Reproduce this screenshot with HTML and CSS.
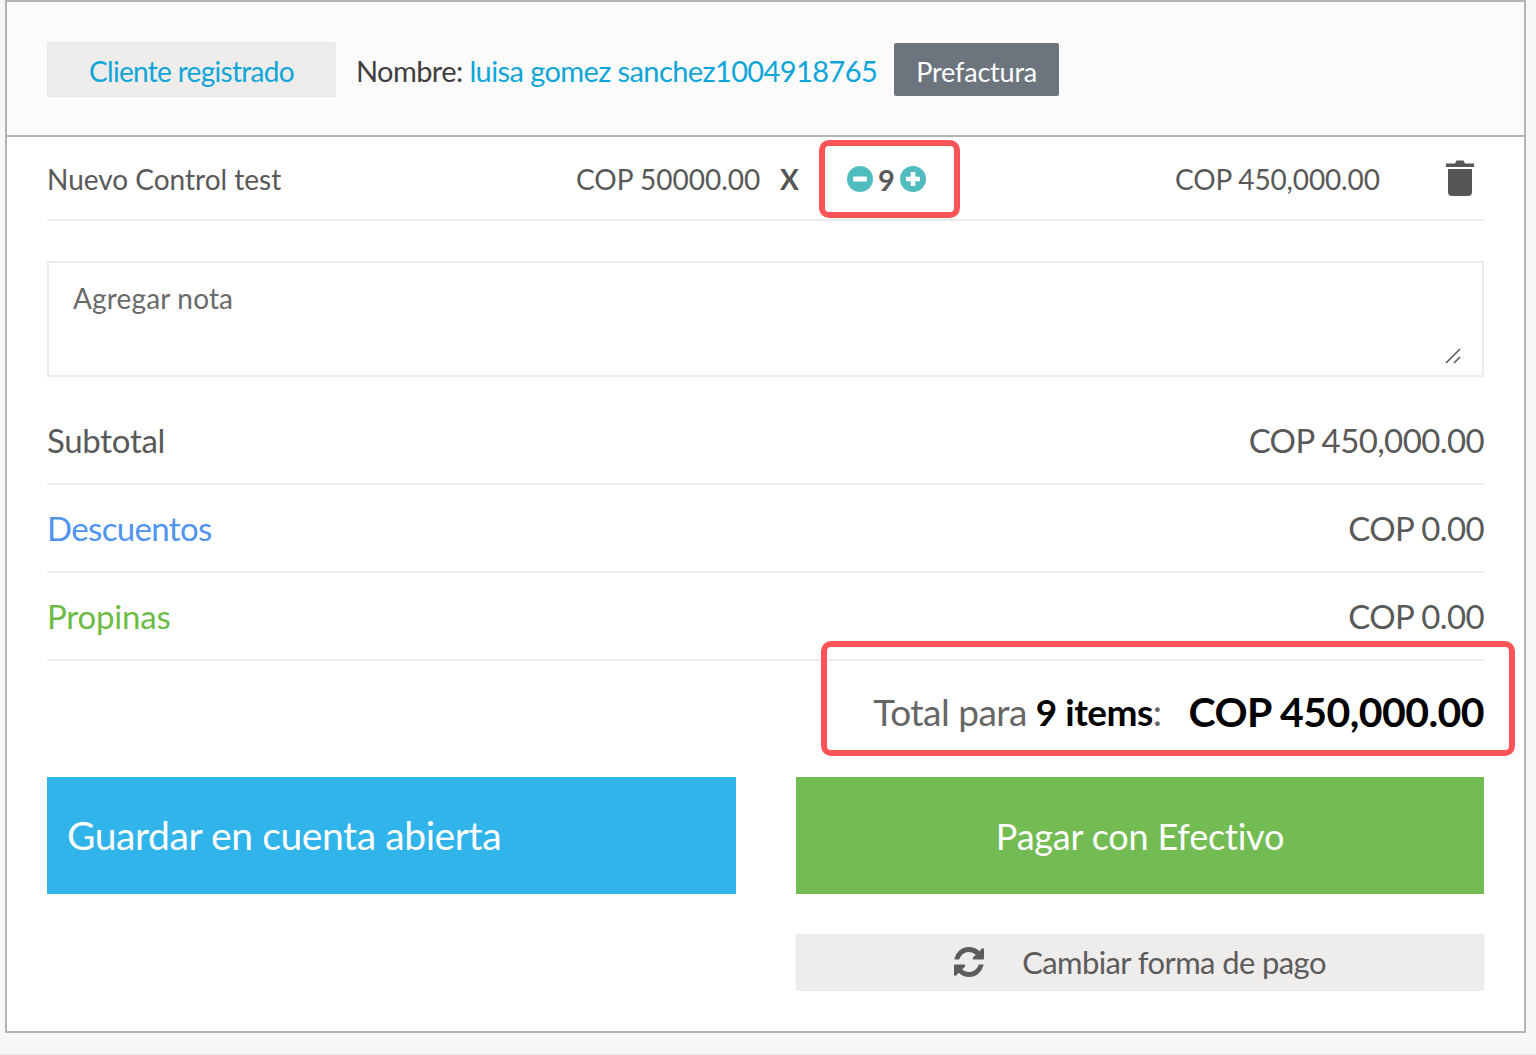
FILE: index.html
```html
<!DOCTYPE html>
<html lang="es">
<head>
<meta charset="utf-8">
<title>Cuenta</title>
<link rel="stylesheet" href="styles.css">
</head>
<body>
<main class="panel">
  <header class="head">
    <button class="client-btn">Cliente registrado</button>
    <span class="client-name">Nombre: <a class="client-link">luisa gomez sanchez1004918765</a></span>
    <button class="invoice-btn">Prefactura</button>
  </header>
  <section class="body">
    <div class="item">
      <span class="item-name">Nuevo Control test</span>
      <span class="item-price">COP 50000.00</span>
      <span class="item-x">X</span>
      <span class="qty">
        <svg class="qty-icon" viewBox="0 0 26 26"><circle cx="13" cy="13" r="13" fill="#50bcbd"/><rect x="6" y="10.5" width="14" height="5" rx="1" fill="#fff"/></svg>
        <span class="qty-num">9</span>
        <svg class="qty-icon" viewBox="0 0 26 26"><circle cx="13" cy="13" r="13" fill="#50bcbd"/><path d="M6 13h14M13 6v14" stroke="#fff" stroke-width="4.6" fill="none"/></svg>
      </span>
      <span class="item-total">COP 450,000.00</span>
      <svg class="trash" viewBox="0 0 28 38"><path d="M0 4.5h9L10.5 1.5h7L19 4.5h9v3.500H0z" fill="#555"/><path d="M2 10h24v23a4 4 0 0 1-4 4H6a4 4 0 0 1-4-4z" fill="#555"/></svg>
    </div>
    <div class="note">
      <span class="note-text">Agregar nota</span>
      <svg class="grip" viewBox="0 0 16 16"><path d="M1 15L15 1M9 15l6-6" stroke="#555" stroke-width="1.500" fill="none"/></svg>
    </div>
    <div class="sum-row"><span class="subtotal">Subtotal</span><span class="sum-value">COP 450,000.00</span></div>
    <div class="sum-row"><span class="discount">Descuentos</span><span class="sum-value">COP 0.00</span></div>
    <div class="sum-row"><span class="tips">Propinas</span><span class="sum-value">COP 0.00</span></div>
    <div class="total">
      <span class="total-label">Total para <b class="total-strong">9 items</b>:</span>
      <strong class="total-value">COP 450,000.00</strong>
    </div>
    <div class="actions">
      <button class="btn btn-save">Guardar en cuenta abierta</button>
      <button class="btn btn-pay">Pagar con Efectivo</button>
    </div>
    <div class="change-row">
      <button class="change-btn">
        <svg class="sync" viewBox="0 0 1536 1536"><path fill="#5c5c5c" d="M1511 928q0 5-1 7-64 268-268 434.500T764 1536q-146 0-282.500-55T238 1324l-129 129q-19 19-45 19t-45-19-19-45V960q0-26 19-45t45-19h448q26 0 45 19t19 45-19 45l-137 137q71 66 161 102t187 36q134 0 250-65t186-179q11-17 53-117 8-23 30-23h192q13 0 22.500 9.500t9.500 22.500zm25-800v448q0 26-19 45t-45 19h-448q-26 0-45-19t-19-45 19-45l138-138Q969 256 768 256q-134 0-250 65T332 500q-11 17-53 117-8 23-30 23H50q-13 0-22.500-9.500T18 608v-7q65-268 270-434.500T768 0q146 0 284 55.500T1297 212l130-129q19-19 45-19t45 19 19 45z"/></svg>
        <span>Cambiar forma de pago</span>
      </button>
    </div>
  </section>
  <div class="mark mark-qty"></div>
  <div class="mark mark-total"></div>
</main>
</body>
</html>
```
FILE: styles.css
```css
* { box-sizing: border-box; }
html, body { margin: 0; height: 1055px; overflow: hidden; }
body { background: #f6f7f9; font-family: Lato, sans-serif; color: #595959; padding: 0 10px 0 5px; border-bottom: 1px solid #e6e6e6; }
button { font-family: inherit; cursor: pointer; border: 0; padding: 0; }
.panel { position: relative; height: 1033px; background: #fff; border: 2px solid #b4b4b4; }
.head { height: 135px; background: #fbfbfb; border-bottom: 2px solid #b4b4b4; display: flex; align-items: center; padding: 1px 0 0 40px; }
.client-btn { width: 289px; height: 55px; padding-top: 3px; background: #efecec; border: 1px solid #e9e9e9; color: #0ea5d8; font-size: 28px; letter-spacing: -.7px; }
.client-name { margin: 2px 0 0 20px; font-size: 29px; color: #3f3f3f; letter-spacing: -.6px; }
.client-link { color: #0ea5d8; }
.invoice-btn { margin-left: 17px; width: 165px; height: 53px; padding-top: 4px; background: #6c757d; color: #fff; font-size: 27px; letter-spacing: -.2px; border-radius: 2px; }
.body { padding: 0 40px; }
.item { height: 84px; display: flex; align-items: center; border-bottom: 2px solid #ececec; font-size: 28px; padding-top: 2px; }
.item-name { width: 529px; }
.item-price { width: 204px; }
.item-x { width: 67px; font-weight: 700; color: #555; }
.qty { display: flex; align-items: center; gap: 5px; width: 328px; }
.qty-icon { width: 26px; height: 26px; }
.qty-num { font-weight: 700; font-size: 29px; }
.item-total { width: 271px; letter-spacing: -.15px; }
.trash { width: 28px; height: 38px; margin-top: -2px; }
.note { position: relative; height: 116px; margin-top: 40px; border: 2px solid #ececec; padding: 19px 24px; font-size: 28px; color: #6a6a6a; letter-spacing: .15px; }
.note-text { display: block; line-height: 33px; }
.grip { position: absolute; right: 21px; bottom: 11px; width: 16px; height: 16px; }
.sum-row { height: 88px; display: flex; align-items: center; justify-content: space-between; border-bottom: 2px solid #ececec; font-size: 33px; }
.note + .sum-row { margin-top: 20px; }
.sum-value { letter-spacing: -.6px; }
.subtotal { letter-spacing: -.3px; }
.discount { color: #4f94f0; letter-spacing: -.65px; }
.tips { color: #6dbb45; letter-spacing: -.2px; }
.total { height: 116px; display: flex; align-items: center; justify-content: flex-end; padding-bottom: 15px; }
.total-label { font-size: 37px; color: #666; letter-spacing: -.5px; }
.total-strong { color: #000; font-weight: 700; }
.total-value { margin-left: 27px; font-size: 41px; color: #000; font-weight: 700; letter-spacing: -.57px; }
.actions { display: grid; grid-template-columns: 689px 688px; justify-content: space-between; }
.btn { height: 117px; color: #fff; }
.btn-save { background: #30b4e9; text-align: left; padding: 0 0 2px 20px; font-size: 39px; letter-spacing: -.4px; }
.btn-pay { background: #73bb53; font-size: 36px; letter-spacing: -.2px; }
.change-row { display: flex; justify-content: flex-end; margin-top: 40px; }
.change-btn { width: 688px; height: 57px; padding-bottom: 2px; background: #efecec; border: 1px solid #e9e9e9; color: #5c5c5c; font-size: 31px; letter-spacing: -.6px; display: flex; align-items: center; justify-content: center; gap: 38px; }
.sync { width: 30px; height: 30px; }
.mark { position: absolute; border: 6px solid #fd5557; border-radius: 10px; pointer-events: none; }
.mark-qty { left: 812px; top: 138px; width: 141px; height: 78px; }
.mark-total { left: 814px; top: 639px; width: 694px; height: 115px; }
```
